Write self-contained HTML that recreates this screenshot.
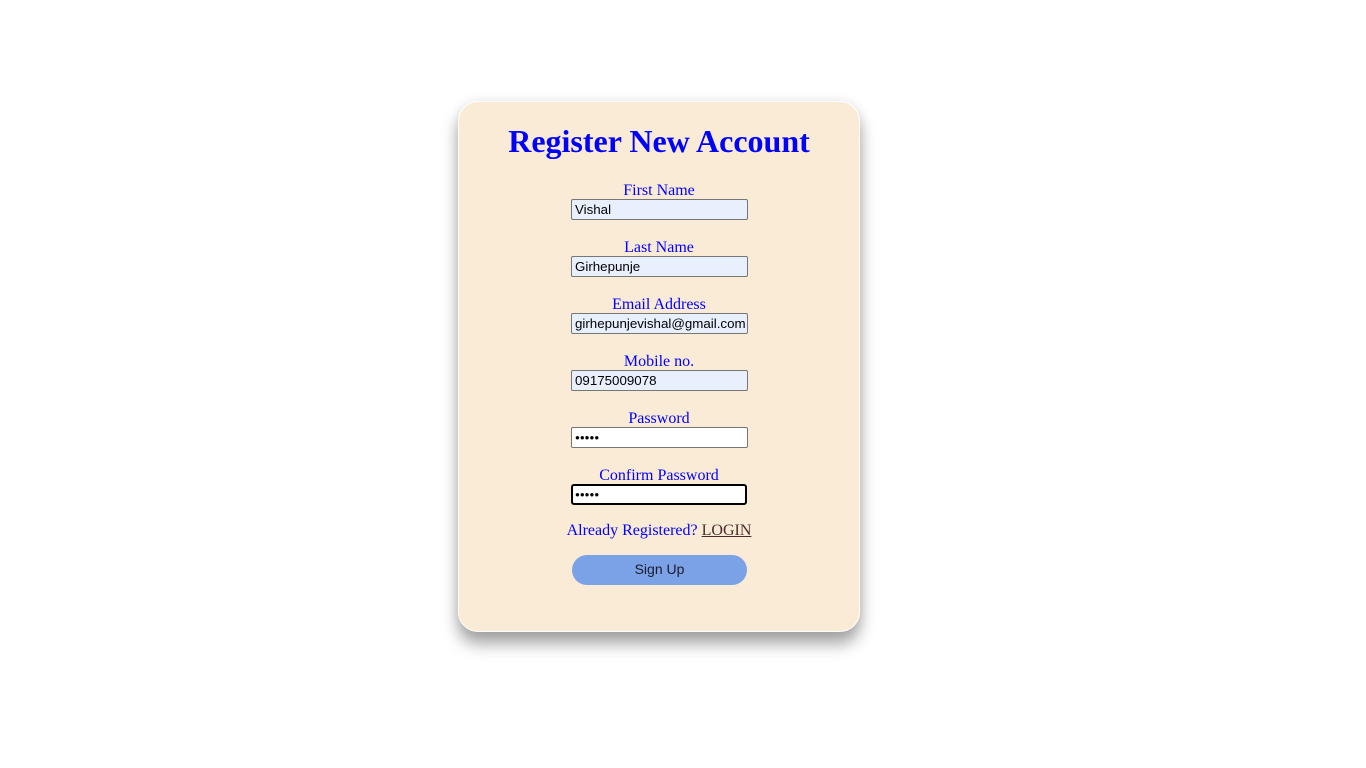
<!DOCTYPE html>
<html><head><meta charset="utf-8"><style>
html,body{margin:0;padding:0;background:#fff;width:1366px;height:768px;overflow:hidden;}
.card{position:absolute;left:458px;top:101px;width:400px;height:529px;background:#faebd7;border:1px solid #fff;border-radius:20px;box-shadow:0 12px 16px rgba(0,0,0,0.35),0 0 12px rgba(0,0,0,0.08);}
.t{position:absolute;left:458px;width:402px;text-align:center;font-family:"Liberation Serif",serif;color:#0000ff;}
h1{position:absolute;left:458px;width:402px;top:123px;margin:0;text-align:center;font:bold 32px/37px "Liberation Serif",serif;color:#0000ff;}
.l{font-size:16px;line-height:18px;}
.i{position:absolute;left:571px;width:172px;border:1px solid #767676;border-radius:2px;background:#e8f0fe;font:13.33px/19px "Liberation Sans",Arial,sans-serif;color:#000;padding:0 0 0 3px;box-sizing:content-box;height:19px;overflow:hidden;white-space:nowrap;}
.w{background:#fff;font-size:8px;letter-spacing:0px;}
.f{border:2px solid #000;border-radius:3px;left:571px;width:170px;height:17px;line-height:17px;padding-left:2px;}
.btn{position:absolute;left:572px;top:555px;width:175px;height:30px;border-radius:15px;background:#7ba1e6;font:14px/29px "Liberation Sans",Arial,sans-serif;color:#1a1a2e;text-align:center;}
a{color:#4b2a2a;text-decoration:underline;}
</style></head><body>
<div class="card"></div>
<h1>Register New Account</h1>
<div class="t l" style="top:182px">First Name</div>
<div class="i" style="top:199px">Vishal</div>
<div class="t l" style="top:239px">Last Name</div>
<div class="i" style="top:256px">Girhepunje</div>
<div class="t l" style="top:296px">Email Address</div>
<div class="i" style="top:313px">girhepunjevishal@gmail.com</div>
<div class="t l" style="top:353px">Mobile no.</div>
<div class="i" style="top:370px">09175009078</div>
<div class="t l" style="top:410px">Password</div>
<div class="i w" style="top:427px">●●●●●</div>
<div class="t l" style="top:467px">Confirm Password</div>
<div class="i w f" style="top:484px">●●●●●</div>
<div class="t l" style="top:522px">Already Registered? <a>LOGIN</a></div>
<div class="btn">Sign Up</div>
</body></html>
